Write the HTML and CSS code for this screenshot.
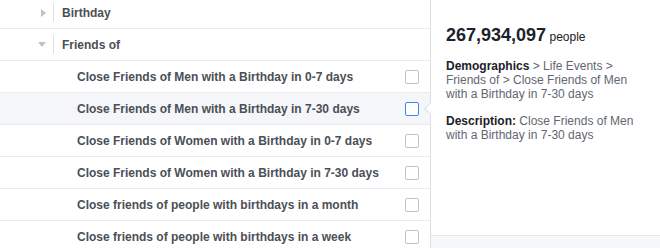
FILE: index.html
```html
<!DOCTYPE html>
<html lang="en">

<head>
    <meta charset="UTF-8">
    <meta name="viewport" content="width=device-width, initial-scale=1.0">
    <title>Detailed targeting</title>
    <link rel="stylesheet" href="styles.css">
</head>

<body>
    <div class="layout">
        <div class="tree">
            <div class="row group">
                <span class="caret caret-right"></span>
                <span class="sep"></span>
                <span class="group-label">Birthday</span>
            </div>
            <div class="row group">
                <span class="caret caret-down"></span>
                <span class="sep"></span>
                <span class="group-label">Friends of</span>
            </div>
            <div class="row item">
                <span class="label">Close Friends of Men with a Birthday in 0-7 days</span>
                <span class="check"></span>
            </div>
            <div class="row item active">
                <span class="label">Close Friends of Men with a Birthday in 7-30 days</span>
                <span class="check"></span>
            </div>
            <div class="row item">
                <span class="label">Close Friends of Women with a Birthday in 0-7 days</span>
                <span class="check"></span>
            </div>
            <div class="row item">
                <span class="label">Close Friends of Women with a Birthday in 7-30 days</span>
                <span class="check"></span>
            </div>
            <div class="row item">
                <span class="label">Close friends of people with birthdays in a month</span>
                <span class="check"></span>
            </div>
            <div class="row item">
                <span class="label">Close friends of people with birthdays in a week</span>
                <span class="check"></span>
            </div>
        </div>

        <div class="detail">
            <div class="detail-body">
                <div class="reach"><span class="count">267,934,097</span> <span class="unit">people</span></div>
                <p class="info"><b>Demographics</b> &gt; Life Events &gt; Friends of &gt; Close Friends of Men with a Birthday in 7-30 days</p>
                <p class="info"><b>Description:</b> Close Friends of Men with a Birthday in 7-30 days</p>
            </div>
            <div class="detail-foot"></div>
        </div>
    </div>
</body>

</html>
```

FILE: styles.css
```css
body {
    margin: 0;
    padding: 0;
    background-color: #fff;
    font-family: 'Liberation Sans', Arial, Helvetica, sans-serif;
    font-size: 12px;
    color: #4b4f56;
}

.layout {
    display: flex;
    height: 248px;
    overflow: hidden;
}

/* left tree */
.tree {
    width: 430px;
    flex-shrink: 0;
    margin-top: -3px;
}

.row {
    position: relative;
    display: flex;
    align-items: center;
    height: 32px;
    box-sizing: border-box;
    border-bottom: 1px solid #e9ebee;
}

.group {
    padding-left: 38px;
}

.caret {
    width: 8px;
    height: 8px;
    display: flex;
    justify-content: center;
    align-items: center;
}

.caret::before {
    content: '';
    display: block;
    width: 0;
    height: 0;
}

.caret-right::before {
    border-top: 4px solid transparent;
    border-bottom: 4px solid transparent;
    border-left: 5px solid #bec2c9;
    margin-left: 2px;
}

.caret-down::before {
    border-left: 4px solid transparent;
    border-right: 4px solid transparent;
    border-top: 5px solid #bec2c9;
}

.sep {
    width: 1px;
    height: 19px;
    background-color: #dddfe2;
    margin-left: 7px;
}

.group-label {
    margin-left: 8px;
    font-weight: bold;
    color: #4b4f56;
}

.item {
    padding-left: 77px;
    padding-right: 11px;
}

.item .label {
    flex: 1;
    font-weight: bold;
    color: #4b4f56;
}

.check {
    width: 14px;
    height: 14px;
    box-sizing: border-box;
    border: 1px solid #bec2c9;
    border-radius: 2px;
    background-color: #fff;
}

.item.active {
    background-color: #f5f6f9;
}

.item.active .check {
    border-color: #4080ff;
}

/* notch pointing at the hovered row */
.item.active::after {
    content: '';
    position: absolute;
    right: -5px;
    top: 11px;
    width: 8px;
    height: 8px;
    background-color: #fff;
    border-left: 1px solid #dddfe2;
    border-bottom: 1px solid #dddfe2;
    transform: rotate(45deg);
    z-index: 2;
}

/* right panel */
.detail {
    flex: 1;
    display: flex;
    flex-direction: column;
    border-left: 1px solid #dddfe2;
    background-color: #fff;
}

.detail-body {
    padding: 24px 22px 0 15px;
}

.reach {
    line-height: 22px;
    color: #1d2129;
}

.count {
    font-size: 18px;
    font-weight: bold;
}

.unit {
    font-size: 12px;
    color: #1d2129;
}

.info {
    margin: 11px 0 0;
    line-height: 14px;
    color: #616770;
}

.info + .info {
    margin-top: 13px;
}

.info b {
    color: #1d2129;
}

.detail-foot {
    margin-top: auto;
    height: 12px;
    border-top: 1px solid #e5e6e9;
    background-color: #f6f7f9;
}
```
